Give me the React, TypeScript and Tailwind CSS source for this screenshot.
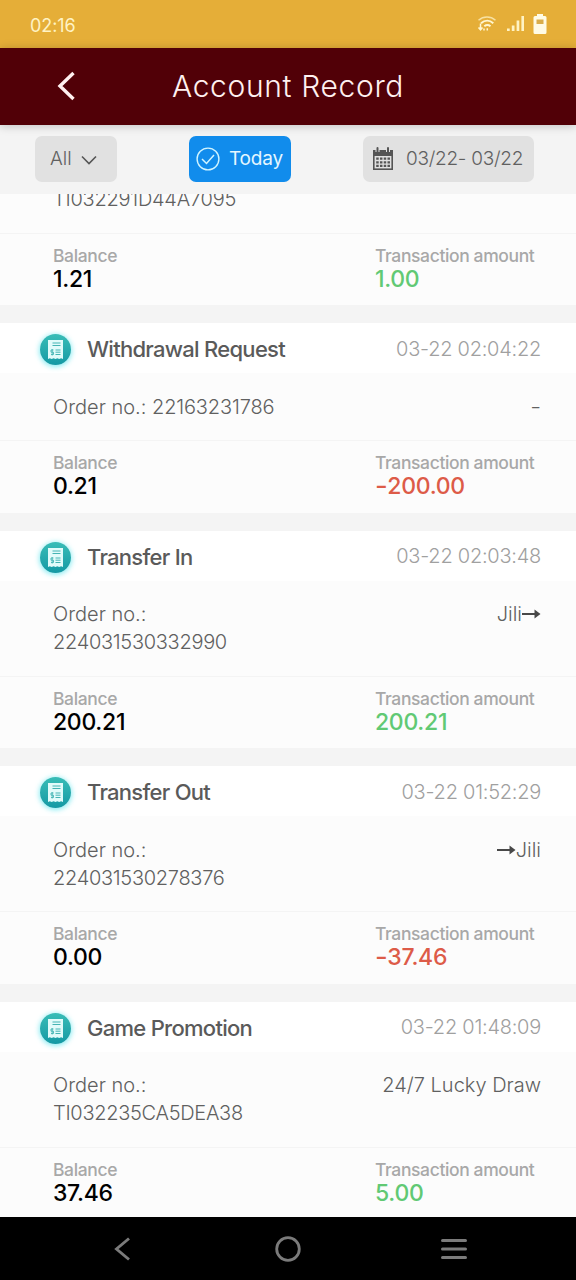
import { ReactNode } from "react";

type TransactionRecord = {
  title: string;
  date: string;
  order: string;
  twoLines: boolean;
  note: ReactNode;
  balance: string;
  amount: string;
};

const ArrowRight = () => (
  <svg width="19" height="12" viewBox="0 0 19 12" className="shrink-0">
    <path d="M0 6h14" stroke="#484848" strokeWidth="2" />
    <path d="M12.5 1.500 18.500 6l-6 4.500z" fill="#484848" />
  </svg>
);

const records: TransactionRecord[] = [
  {
    title: "Withdrawal Request",
    date: "03-22 02:04:22",
    order: "22163231786",
    twoLines: false,
    note: <span className="inline-block origin-right scale-x-120">-</span>,
    balance: "0.21",
    amount: "-200.00",
  },
  {
    title: "Transfer In",
    date: "03-22 02:03:48",
    order: "224031530332990",
    twoLines: true,
    note: (
      <>
        Jili
        <ArrowRight />
      </>
    ),
    balance: "200.21",
    amount: "200.21",
  },
  {
    title: "Transfer Out",
    date: "03-22 01:52:29",
    order: "224031530278376",
    twoLines: true,
    note: (
      <>
        <ArrowRight />
        Jili
      </>
    ),
    balance: "0.00",
    amount: "-37.46",
  },
  {
    title: "Game Promotion",
    date: "03-22 01:48:09",
    order: "TI032235CA5DEA38",
    twoLines: true,
    note: "24/7 Lucky Draw",
    balance: "37.46",
    amount: "5.00",
  },
];

const StatusBar = () => (
  <div className="flex h-12 shrink-0 items-center justify-between bg-[#e5ae38] pl-[30px] pr-[29px] text-[#fff3c4]">
    <span className="mt-[3px] text-[18px] leading-none tracking-[-0.1px]">02:16</span>
    <div className="flex items-center">
      <svg width="20" height="18" viewBox="0 0 20 18" fill="none" stroke="#fff6cf">
        <path d="M1.500 5.200C6.500 .8 13.500 .8 18.500 5.200" strokeWidth="1.500" opacity=".7" />
        <path d="M4 8.200c3.800-3.200 8.600-3.200 12.300 0" strokeWidth="2" />
        <path d="M7.300 11.300c2-1.600 4.200-1.600 6.200 0" strokeWidth="2" />
        <path d="M10.300 13.200v2.300M3.500 8.500v6M1.500 12.500l2 2.300 2-2.300M7 15.500v-2" strokeWidth="1.500" />
      </svg>
      <svg width="19" height="16" viewBox="0 0 19 16" fill="#fff3c4" className="ml-[9px]">
        <path d="M1 12.500h2.700V15H1zM5.800 9.500h2.700V15H5.800zM10.600 4.500h2.700V15h-2.700zM15.400 0H18v15h-2.600z" />
      </svg>
      <svg width="14" height="20" viewBox="0 0 14 20" className="ml-[8px]">
        <path d="M4 0h6v2h2a1.500 1.500 0 0 1 1.500 1.500v15A1.500 1.500 0 0 1 12 20H2a1.500 1.500 0 0 1-1.500-1.500v-15A1.500 1.500 0 0 1 2 2h2z" fill="#fffbe6" />
        <path d="M3.500 5.500h7V10h-7z" fill="#d9ad4c" />
      </svg>
    </div>
  </div>
);

const Header = () => (
  <header className="z-10 grid h-[77px] shrink-0 grid-cols-[1fr_auto_1fr] items-center bg-[#510007] text-[#fff0f0] shadow-[0_1px_9px_rgba(0,0,0,0.22)]">
    <svg width="20" height="30" viewBox="0 0 20 30" fill="none" className="ml-[56px] -mt-[1px]">
      <path d="M17.500 2 4 15l13.500 13" stroke="#fff0f0" strokeWidth="3.400" />
    </svg>
    <h1 className="-mt-px text-[30px] leading-none font-[350] tracking-[0.65px]">Account Record</h1>
  </header>
);

const CalendarIcon = () => (
  <svg width="22" height="24" viewBox="0 0 22 24">
    <path d="M1 3h20v20H1z" fill="#555" />
    <path d="M2.600 9h16.800v12.400H2.600z" fill="#e1e1e1" />
    <path d="M5.500 0v5M16 0v5" stroke="#e1e1e1" strokeWidth="4" />
    <path d="M5.500 1v4.400M16 1v4.400" stroke="#555" strokeWidth="2" strokeLinecap="round" />
    <path
      d="M4.200 11.700h13.800M4.200 15.300h13.800M4.200 18.900h13.800"
      stroke="#555"
      strokeWidth="2.200"
      strokeDasharray="2.500 1.260"
    />
  </svg>
);

const Filters = () => (
  <div className="flex h-[69px] shrink-0 items-start bg-[#f4f4f4] pt-[11px] text-[19px] font-[350] text-[#606060]">
    <button className="ml-[35px] flex h-[46px] w-[82px] items-center rounded-[7px] bg-[#e1e1e1] pl-[15px]">
      <span className="mt-px">All</span>
      <svg width="16" height="10" viewBox="0 0 16 10" fill="none" className="ml-[9px] mt-[2px]">
        <path d="m1 1.500 7 7 7-7" stroke="#555" strokeWidth="1.600" />
      </svg>
    </button>
    <button className="ml-[72px] flex h-[46px] w-[102px] items-center rounded-[7px] bg-[#118cec] pl-[7px] font-normal text-[#e4f7ff]">
      <svg width="24" height="24" viewBox="0 0 24 24" fill="none" stroke="#d0f4ff">
        <circle cx="12" cy="12" r="10.900" strokeWidth="1.400" />
        <path d="m6 12 4.500 4.500L18 8" strokeWidth="1.500" />
      </svg>
      <span className="ml-[9px] mt-px tracking-[-0.2px]">Today</span>
    </button>
    <button className="ml-[72px] flex h-[46px] w-[171px] items-center whitespace-nowrap rounded-[7px] bg-[#e1e1e1] pl-[9px]">
      <CalendarIcon />
      <span className="ml-[12px] mt-px tracking-[-0.27px]">03/22- 03/22</span>
    </button>
  </div>
);

const ReceiptIcon = () => (
  <div className="flex size-[31px] items-center justify-center rounded-full bg-linear-to-b from-[#38bdb7] to-[#1399a4] shadow-[0_1px_5px_1px_rgba(70,225,235,0.6)]">
    <svg width="15" height="19" viewBox="0 0 15 19" fill="none">
      <path d="M0 0h15v19l-1.900-.8-1.900.8-1.900-.8-1.800.8-1.900-.8-1.900.8-1.900-.8L0 19z" fill="#e2fbfa" />
      <path d="M4.500 3h8M4.500 5.500h8M7.500 10h5M7.500 12.200h5M7.500 14.500h5" stroke="#45b4b4" />
      <path d="M5.500 10H3v2.200h2.500v2.300H3M4.200 9v6.500" stroke="#45b4b4" strokeWidth=".9" />
    </svg>
  </div>
);

const Amount = ({ value }: { value: string }) => {
  const negative = value.startsWith("-");
  return (
    <p
      className={`flex text-[23px] leading-[26px] tracking-[-0.3px] ${
        negative ? "text-[#dd5b48]" : "text-[#61c974]"
      }`}
    >
      {negative && <span className="mr-[2px] inline-block origin-left scale-x-120">-</span>}
      {negative ? value.slice(1) : value}
    </p>
  );
};

const Label = ({ children }: { children: ReactNode }) => (
  <p className="text-[17.5px] leading-[21px] font-medium tracking-[-0.38px] text-[#a8a8a8]">{children}</p>
);

const Totals = ({ balance, amount }: { balance: string; amount: string }) => (
  <div className="flex h-[72.5px] border-t border-[#f4f4f4] pl-[53px] pt-[11px] font-medium">
    <div className="w-[322px]">
      <Label>Balance</Label>
      <p className="text-[23px] leading-[26px] tracking-[-0.3px] text-black">{balance}</p>
    </div>
    <div>
      <Label>Transaction amount</Label>
      <Amount value={amount} />
    </div>
  </div>
);

const RecordCard = ({ record }: { record: TransactionRecord }) => (
  <section className="mb-[18px] shrink-0 bg-[#fcfcfc]">
    <div className="flex h-[50px] items-center bg-white pl-[40px] pr-[35px] pt-[3px]">
      <ReceiptIcon />
      <h2 className="-mt-px ml-[16px] text-[22px] leading-none font-medium tracking-[-0.72px] text-[#5a5a5a]">
        {record.title}
      </h2>
      <span className="-mt-[2px] ml-auto text-[20px] leading-none font-[350] tracking-[-0.25px] text-[#a0a0a0]">
        {record.date}
      </span>
    </div>
    <div
      className={`flex items-start justify-between pl-[53px] pr-[35px] pt-[19.500px] text-[20px] leading-[28px] font-[350] text-[#606060] ${
        record.twoLines ? "h-[95px]" : "h-[67px]"
      }`}
    >
      <p>
        Order no.:{record.twoLines ? <br /> : " "}
        <span className={record.twoLines ? "tracking-[-0.3px]" : "tracking-[-0.15px]"}>{record.order}</span>
      </p>
      <span className="flex items-center">{record.note}</span>
    </div>
    <Totals balance={record.balance} amount={record.amount} />
  </section>
);

const NavBar = () => (
  <nav className="z-10 flex h-[63px] shrink-0 items-center bg-black pl-[113px]">
    <svg width="18" height="24" viewBox="0 0 18 24" fill="none">
      <path d="M16 1.500 3.500 12 16 22.500" stroke="#7b7b7b" strokeWidth="2.900" />
    </svg>
    <svg width="28" height="28" viewBox="0 0 28 28" fill="none" className="ml-[143px]">
      <circle cx="14" cy="14" r="11.300" stroke="#7b7b7b" strokeWidth="2.800" />
    </svg>
    <svg width="26" height="20" viewBox="0 0 26 20" className="ml-[139px] mt-[1px]">
      <path d="M1.500 1.600h23M1.500 10h23M1.500 18.400h23" stroke="#7b7b7b" strokeWidth="3" strokeLinecap="round" />
    </svg>
  </nav>
);

export default function App() {
  return (
    <div className="flex h-[1280px] w-[576px] flex-col overflow-hidden bg-[#f4f4f4] font-['Inter',sans-serif]">
      <StatusBar />
      <Header />
      <Filters />
      <main className="flex min-h-0 flex-1 flex-col overflow-hidden">
        <section className="mb-[18px] shrink-0 bg-[#fcfcfc]">
          <div className="flex h-[38.5px] items-end overflow-hidden pb-[19.5px] pl-[53px] text-[20px] leading-[28px] font-[350] tracking-[-0.25px] text-[#606060]">
            TI032291D44A7095
          </div>
          <Totals balance="1.21" amount="1.00" />
        </section>
        {records.map((record) => (
          <RecordCard key={record.date} record={record} />
        ))}
      </main>
      <NavBar />
    </div>
  );
}
